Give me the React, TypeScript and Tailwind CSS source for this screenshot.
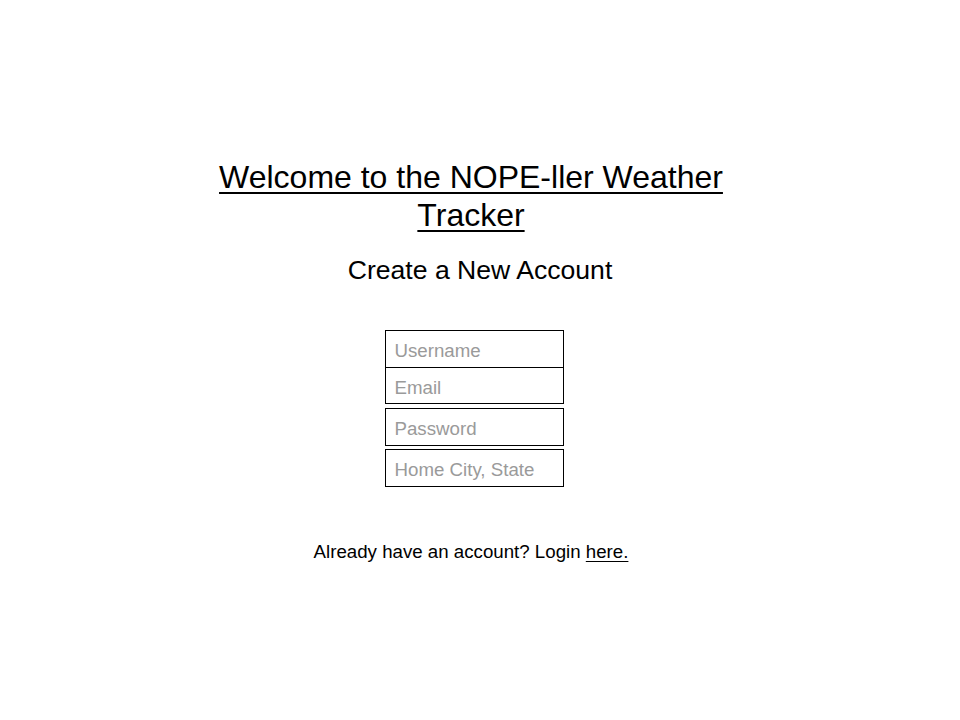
import { useState } from "react";

const font = { fontFamily: '"Liberation Sans", Arial, sans-serif' };

export default function App() {
  const [form, setForm] = useState({ username: "", email: "", password: "", city: "" });

  const field =
    "block w-[179px] border border-black bg-white pl-[9px] pt-[4px] text-[18.7px] text-black placeholder:text-[#9a9a9a] outline-none";

  return (
    <div className="min-h-[720px] w-[960px] bg-white text-black" style={font}>
      <div className="flex w-[942px] flex-col items-center pt-[158px]">
        <h1 className="text-center text-[32px] leading-[38px] underline decoration-[2px] underline-offset-[4px]">
          Welcome to the NOPE-ller Weather
          <br />
          Tracker
        </h1>

        <h2 className="ml-[18px] mt-[19px] text-[26.6px] leading-[34px]">Create a New Account</h2>

        <form className="ml-[6px] mt-[43px] flex flex-col" onSubmit={(e) => e.preventDefault()}>
          <input
            className={`${field} h-[38px]`}
            placeholder="Username"
            value={form.username}
            onChange={(e) => setForm({ ...form, username: e.target.value })}
          />
          <input
            className={`${field} -mt-px h-[37px]`}
            placeholder="Email"
            type="email"
            value={form.email}
            onChange={(e) => setForm({ ...form, email: e.target.value })}
          />
          <input
            className={`${field} mt-[4px] h-[38px]`}
            placeholder="Password"
            type="password"
            value={form.password}
            onChange={(e) => setForm({ ...form, password: e.target.value })}
          />
          <input
            className={`${field} mt-[3px] h-[38px]`}
            placeholder="Home City, State"
            value={form.city}
            onChange={(e) => setForm({ ...form, city: e.target.value })}
          />
        </form>

        <p className="mt-[53px] text-[18.7px] leading-[24px]">
          Already have an account? Login{" "}
          <a href="#" className="underline underline-offset-[3px]">
            here.
          </a>
        </p>
      </div>
    </div>
  );
}
